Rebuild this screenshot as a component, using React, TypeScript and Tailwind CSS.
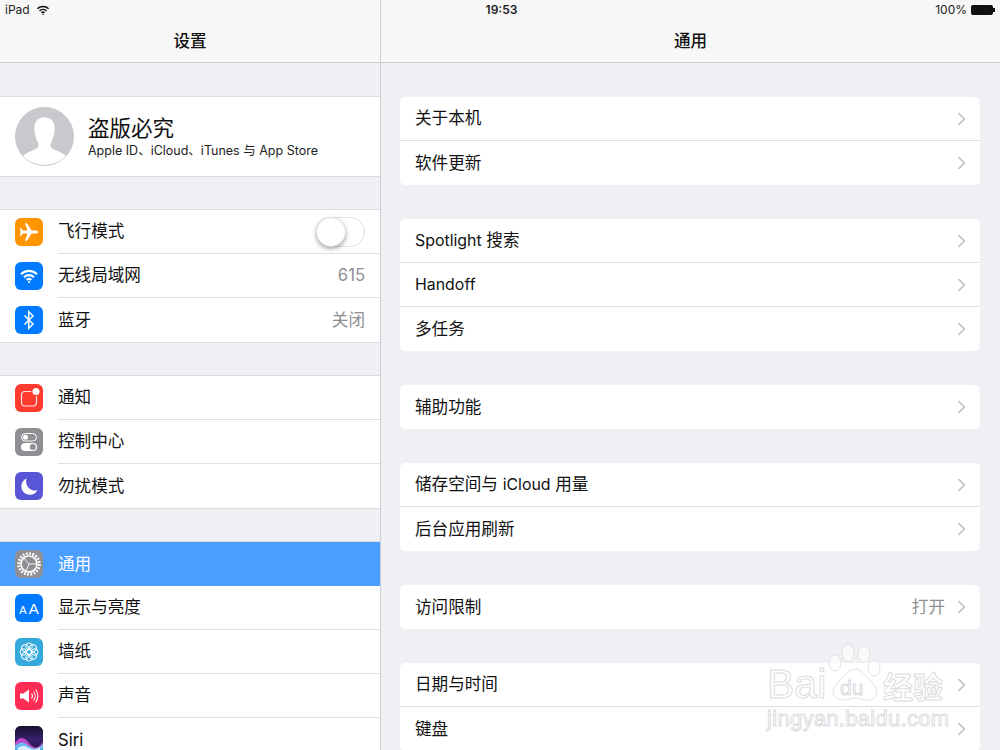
import type { ReactNode } from 'react'

const FONT = '[font-family:Inter,"Noto_Sans_CJK_SC",sans-serif]'

// Inter runs a little wider than the latin text in the shot
const Lat = ({ children }: { children: ReactNode }) => <span className="text-[15.900px]">{children}</span>

function Chevron() {
  return (
    <svg width="9" height="14" viewBox="0 0 9 14" fill="none" className="shrink-0">
      <path d="M1.500 1.200 7.300 7l-5.800 5.800" stroke="#c2c2c7" strokeWidth="1.700" />
    </svg>
  )
}

function IconBox({ color, children }: { color: string; children: ReactNode }) {
  return (
    <div className={`w-[28px] h-[28px] rounded-[6px] shrink-0 flex items-center justify-center overflow-hidden ${color}`}>
      {children}
    </div>
  )
}

const Plane = () => (
  <svg width="22" height="22" viewBox="0 0 24 24" fill="white">
    <path d="M22 12c0-1-1-1.700-2.200-1.700h-4.900L9.700 2.500H7.600l2.600 7.800H5.300L3.500 8H2l.9 4-.9 4h1.500l1.800-2.300h4.900l-2.600 7.800h2.100l5.200-7.800h4.900C21 13.700 22 13 22 12z" />
  </svg>
)

const Wifi = ({ size = 20, color = 'white' }: { size?: number; color?: string }) => (
  <svg width={size} height={size} viewBox="0 0 20 20" fill="none" stroke={color} strokeWidth="2.200" strokeLinecap="butt">
    <path d="M2 8.200a11.500 11.500 0 0 1 16 0" />
    <path d="M5 11.200a7.200 7.200 0 0 1 10 0" />
    <path d="M7.700 14a3.400 3.400 0 0 1 4.600 0" />
    <circle cx="10" cy="16" r="1.100" fill={color} stroke="none" />
  </svg>
)

const Bluetooth = () => (
  <svg width="20" height="22" viewBox="0 0 20 22" fill="none" stroke="white" strokeWidth="1.500">
    <path d="M5.500 6.500 14 15l-4.300 4.500V2.500L14 7l-8.500 8.500" />
  </svg>
)

const Notify = () => (
  <svg width="28" height="28" viewBox="0 0 28 28" fill="none">
    <rect x="6.500" y="7.500" width="15" height="14.500" rx="3.500" stroke="white" strokeWidth="1.200" opacity="0.85" />
    <circle cx="21" cy="7.500" r="4.800" fill="#ff3b30" />
    <circle cx="21" cy="7.500" r="3.500" fill="white" />
  </svg>
)

const Control = () => (
  <svg width="28" height="28" viewBox="0 0 28 28" fill="none">
    <rect x="6.500" y="5.500" width="15" height="7.500" rx="3.750" stroke="white" strokeWidth="1" />
    <circle cx="10.500" cy="9.250" r="2.500" fill="white" />
    <rect x="6" y="15" width="16" height="8" rx="4" fill="white" />
    <circle cx="17.800" cy="19" r="3" fill="#8e8e93" />
  </svg>
)

const Moon = () => (
  <svg width="28" height="28" viewBox="0 0 28 28">
    <path d="M11.500 6.500a8.500 8.500 0 1 0 11 11.500C16.500 20.500 9.500 14.500 11.500 6.500z" fill="white" />
  </svg>
)

const Gear = () => (
  <svg width="26" height="26" viewBox="0 0 26 26" fill="none" stroke="white">
    <circle cx="13" cy="13" r="10.300" strokeWidth="3" strokeDasharray="1.700 1.530" />
    <circle cx="13" cy="13" r="8" strokeWidth="1.600" />
    <path d="M13 13 7 6M13 13l8.500 0M13 13l-3 7" strokeWidth="0.900" />
  </svg>
)

const Wallpaper = () => (
  <svg width="24" height="24" viewBox="0 0 24 24" fill="none" stroke="white" strokeWidth="1">
    <circle cx="12" cy="12" r="2.500" />
    {[0, 45, 90, 135, 180, 225, 270, 315].map((a) => (
      <circle key={a} cx="12" cy="6.300" r="3.300" transform={`rotate(${a} 12 12)`} />
    ))}
  </svg>
)

const Sound = () => (
  <svg width="24" height="24" viewBox="0 0 24 24" fill="none" stroke="white">
    <path d="M3 9.500h3.500L12 5.500v13l-5.500-4H3z" fill="white" stroke="none" />
    <path d="M14.500 9.500a4 4 0 0 1 0 5M16.500 7.500a7 7 0 0 1 0 9M18.500 5.500a10 10 0 0 1 0 13" strokeWidth="1.100" />
  </svg>
)

const Siri = () => (
  <svg width="28" height="28" viewBox="0 0 28 28">
    <defs>
      <linearGradient id="siriBg" x1="0" y1="0" x2="0" y2="1">
        <stop offset="0" stopColor="#15132c" />
        <stop offset="0.5" stopColor="#3a2070" />
        <stop offset="1" stopColor="#1a1436" />
      </linearGradient>
    </defs>
    <rect width="28" height="28" fill="url(#siriBg)" />
    <path d="M0 17c5-7 9-6 14 0s9 6 14-1v7H0z" fill="#d552d8" opacity="0.85" />
    <path d="M0 20c6-5 9-4 14 0s9 3 14-2v6H0z" fill="#5fc8f5" opacity="0.9" />
    <path d="M3 22c5-3 8-2 11 0s8 2 11-1v3H3z" fill="#e8f4ff" opacity="0.9" />
  </svg>
)

function SideRow({
  icon,
  label,
  value,
  selected,
  last,
  children,
}: {
  icon: ReactNode
  label: ReactNode
  value?: string
  selected?: boolean
  last?: boolean
  children?: ReactNode
}) {
  return (
    <div className={`h-[44px] pl-[15px] flex items-center gap-[15px] ${selected ? 'bg-[#4a9eff]' : ''}`}>
      {icon}
      <div className={`flex-1 h-full pr-[15px] flex items-center justify-between ${!last && !selected ? 'border-b border-[#e0e0e3]' : ''}`}>
        <span className={`text-[16.600px] ${selected ? 'text-white' : 'text-[#111]'}`}>{label}</span>
        {value && <span className="text-[16.600px] text-[#8e8e93]">{value}</span>}
        {children}
      </div>
    </div>
  )
}

function SideGroup({ children }: { children: ReactNode }) {
  return <div className="bg-white shadow-[0_-1px_0_#dcdce0,0_1px_0_#dcdce0] mb-[34px]">{children}</div>
}

function MainCard({ rows }: { rows: { label: ReactNode; value?: string }[] }) {
  return (
    <div className="bg-white rounded-[5px] mb-[34px]">
      {rows.map((r, i) => (
        <div
          key={i}
          className={`h-[44px] pr-[14px] pl-[15px] flex items-center justify-between ${i < rows.length - 1 ? 'border-b border-[#e0e0e3]' : ''}`}
        >
          <span className="text-[16.600px] text-[#111]">{r.label}</span>
          <div className="flex items-center gap-[12px]">
            {r.value && <span className="text-[16.600px] text-[#8e8e93]">{r.value}</span>}
            <Chevron />
          </div>
        </div>
      ))}
    </div>
  )
}

function NavBar({ title }: { title: string }) {
  return (
    <div className="h-[63px] shrink-0 bg-[#f7f7f8] border-b border-[#cfcfd3] pt-[20px] flex items-center justify-center">
      <span className="text-[16.600px] font-medium text-[#111]">{title}</span>
    </div>
  )
}

function Watermark() {
  return (
    <div className="absolute left-[766px] top-[642px] w-[182px] h-[92px] pointer-events-none select-none">
      <svg width="182" height="92" viewBox="0 0 182 92" className="absolute left-0 top-0" fill="#ffffff" fillOpacity="0.65" stroke="#e2e2e6" strokeWidth="1">
        <ellipse cx="69" cy="21" rx="6" ry="8" />
        <ellipse cx="82" cy="11" rx="6" ry="8.500" />
        <ellipse cx="98" cy="12" rx="6" ry="8.500" />
        <ellipse cx="108" cy="26" rx="6" ry="8" />
        <path d="M89 27c6 0 9 5 13 9s9 9 9 14-5 9-11 8-7-2-11-2-6 2-11 2-11-3-11-8 5-10 9-14 7-9 13-9z" />
      </svg>
      <span className="absolute left-[1px] top-[20px] text-[41px] leading-[44px] text-white/70 [font-family:'Liberation_Sans',sans-serif] [-webkit-text-stroke:1px_#dcdce0]">
        Bai
      </span>
      <span className="absolute left-[74px] top-[34px] text-[21px] leading-[24px] text-white/70 [font-family:'Liberation_Sans',sans-serif] [-webkit-text-stroke:1px_#dcdce0]">
        du
      </span>
      <span className="absolute left-[117px] top-[26px] text-[30px] leading-[34px] font-bold text-white/70 [font-family:'Noto_Sans_CJK_SC',sans-serif] [-webkit-text-stroke:1px_#dcdce0]">
        经验
      </span>
      <span className="absolute left-[1px] top-[65px] text-[22px] leading-[24px] tracking-[0.300px] text-white/70 [font-family:'Liberation_Sans',sans-serif] [-webkit-text-stroke:1px_#dcdce0]">
        jingyan.baidu.com
      </span>
    </div>
  )
}

export default function App() {
  return (
    <div className={`relative w-[1000px] h-[750px] overflow-hidden flex bg-[#efeff4] ${FONT}`}>
      {/* Sidebar */}
      <div className="w-[381px] shrink-0 h-full flex flex-col border-r border-[#cfcfd3] overflow-hidden">
        <NavBar title="设置" />
        <div className="pt-[34px]">
          <SideGroup>
            <div className="h-[79px] pl-[15px] pb-[1px] flex items-center gap-[14px]">
              <div className="w-[59px] h-[59px] rounded-full overflow-hidden bg-[#c8c8cd]">
                <svg width="59" height="59" viewBox="0 0 58 58" fill="white">
                  <path d="M29 10c-7 0-10 5-10 11 0 3 .5 5 1 7 .5 3 2 6 3 8 .5 2 0 4-2 5-4 2-10 4-13 7 5 6 13 9 21 9s16-3 21-9c-3-3-9-5-13-7-2-1-2.500-3-2-5 1-2 2.500-5 3-8 .5-2 1-4 1-7 0-6-3-11-10-11z" />
                </svg>
              </div>
              <div className="flex flex-col">
                <span className="text-[21.500px] leading-[28px] text-[#111]">盗版必究</span>
                <span className="text-[12.500px] leading-[17px] text-[#222]">Apple ID、iCloud、iTunes 与 App Store</span>
              </div>
            </div>
          </SideGroup>
          <SideGroup>
            <SideRow icon={<IconBox color="bg-[#ff9500]"><Plane /></IconBox>} label="飞行模式">
              <div className="relative w-[49px] h-[30px] rounded-full border border-[#e3e3e6] bg-white">
                <div className="absolute -left-px -top-px w-[30px] h-[30px] rounded-full bg-white border border-[#e0e0e0] shadow-[0_2px_4px_rgba(0,0,0,0.35)]" />
              </div>
            </SideRow>
            <SideRow icon={<IconBox color="bg-[#007aff]"><Wifi /></IconBox>} label="无线局域网" value="615" />
            <SideRow icon={<IconBox color="bg-[#007aff]"><Bluetooth /></IconBox>} label="蓝牙" value="关闭" last />
          </SideGroup>
          <SideGroup>
            <SideRow icon={<IconBox color="bg-[#ff3b30]"><Notify /></IconBox>} label="通知" />
            <SideRow icon={<IconBox color="bg-[#8e8e93]"><Control /></IconBox>} label="控制中心" />
            <SideRow icon={<IconBox color="bg-[#5856d6]"><Moon /></IconBox>} label="勿扰模式" last />
          </SideGroup>
          <SideGroup>
            <SideRow icon={<IconBox color="bg-[#8e8e93]"><Gear /></IconBox>} label="通用" selected />
            <SideRow
              icon={
                <IconBox color="bg-[#007aff]">
                  <span className="text-white leading-none flex items-baseline gap-[2px] [font-family:'Liberation_Sans',sans-serif]">
                    <span className="text-[11px]">A</span>
                    <span className="text-[15px]">A</span>
                  </span>
                </IconBox>
              }
              label="显示与亮度"
            />
            <SideRow icon={<IconBox color="bg-[#34aadc]"><Wallpaper /></IconBox>} label="墙纸" />
            <SideRow icon={<IconBox color="bg-[#ff2d55]"><Sound /></IconBox>} label="声音" />
            <SideRow icon={<IconBox color="bg-[#15132c]"><Siri /></IconBox>} label="Siri" last />
          </SideGroup>
        </div>
      </div>

      {/* Detail pane */}
      <div className="flex-1 h-full flex flex-col overflow-hidden">
        <NavBar title="通用" />
        <div className="pt-[34px] pl-[19px] pr-[20px]">
          <MainCard rows={[{ label: '关于本机' }, { label: '软件更新' }]} />
          <MainCard rows={[{ label: <><Lat>Spotlight</Lat> 搜索</> }, { label: <Lat>Handoff</Lat> }, { label: '多任务' }]} />
          <MainCard rows={[{ label: '辅助功能' }]} />
          <MainCard rows={[{ label: <>储存空间与 <Lat>iCloud</Lat> 用量</> }, { label: '后台应用刷新' }]} />
          <MainCard rows={[{ label: '访问限制', value: '打开' }]} />
          <MainCard rows={[{ label: '日期与时间' }, { label: '键盘' }]} />
        </div>
      </div>

      {/* Status bar sits over both nav bars */}
      <div className="absolute left-0 top-0 w-full h-[20px] px-[5px] grid grid-cols-3 items-center text-[12px] text-[#222]">
        <div className="flex items-center gap-[6px]">
          <span>iPad</span>
          <Wifi size={14} color="#111" />
        </div>
        <span className="text-center font-semibold pl-[3px]">19:53</span>
        <div className="flex items-center justify-end gap-[4px]">
          <span>100%</span>
          <div className="w-[22px] h-[10px] rounded-[2px] bg-[#111]" />
          <div className="w-[2px] h-[4px] bg-[#111] -ml-[4px]" />
        </div>
      </div>

      <Watermark />
    </div>
  )
}
